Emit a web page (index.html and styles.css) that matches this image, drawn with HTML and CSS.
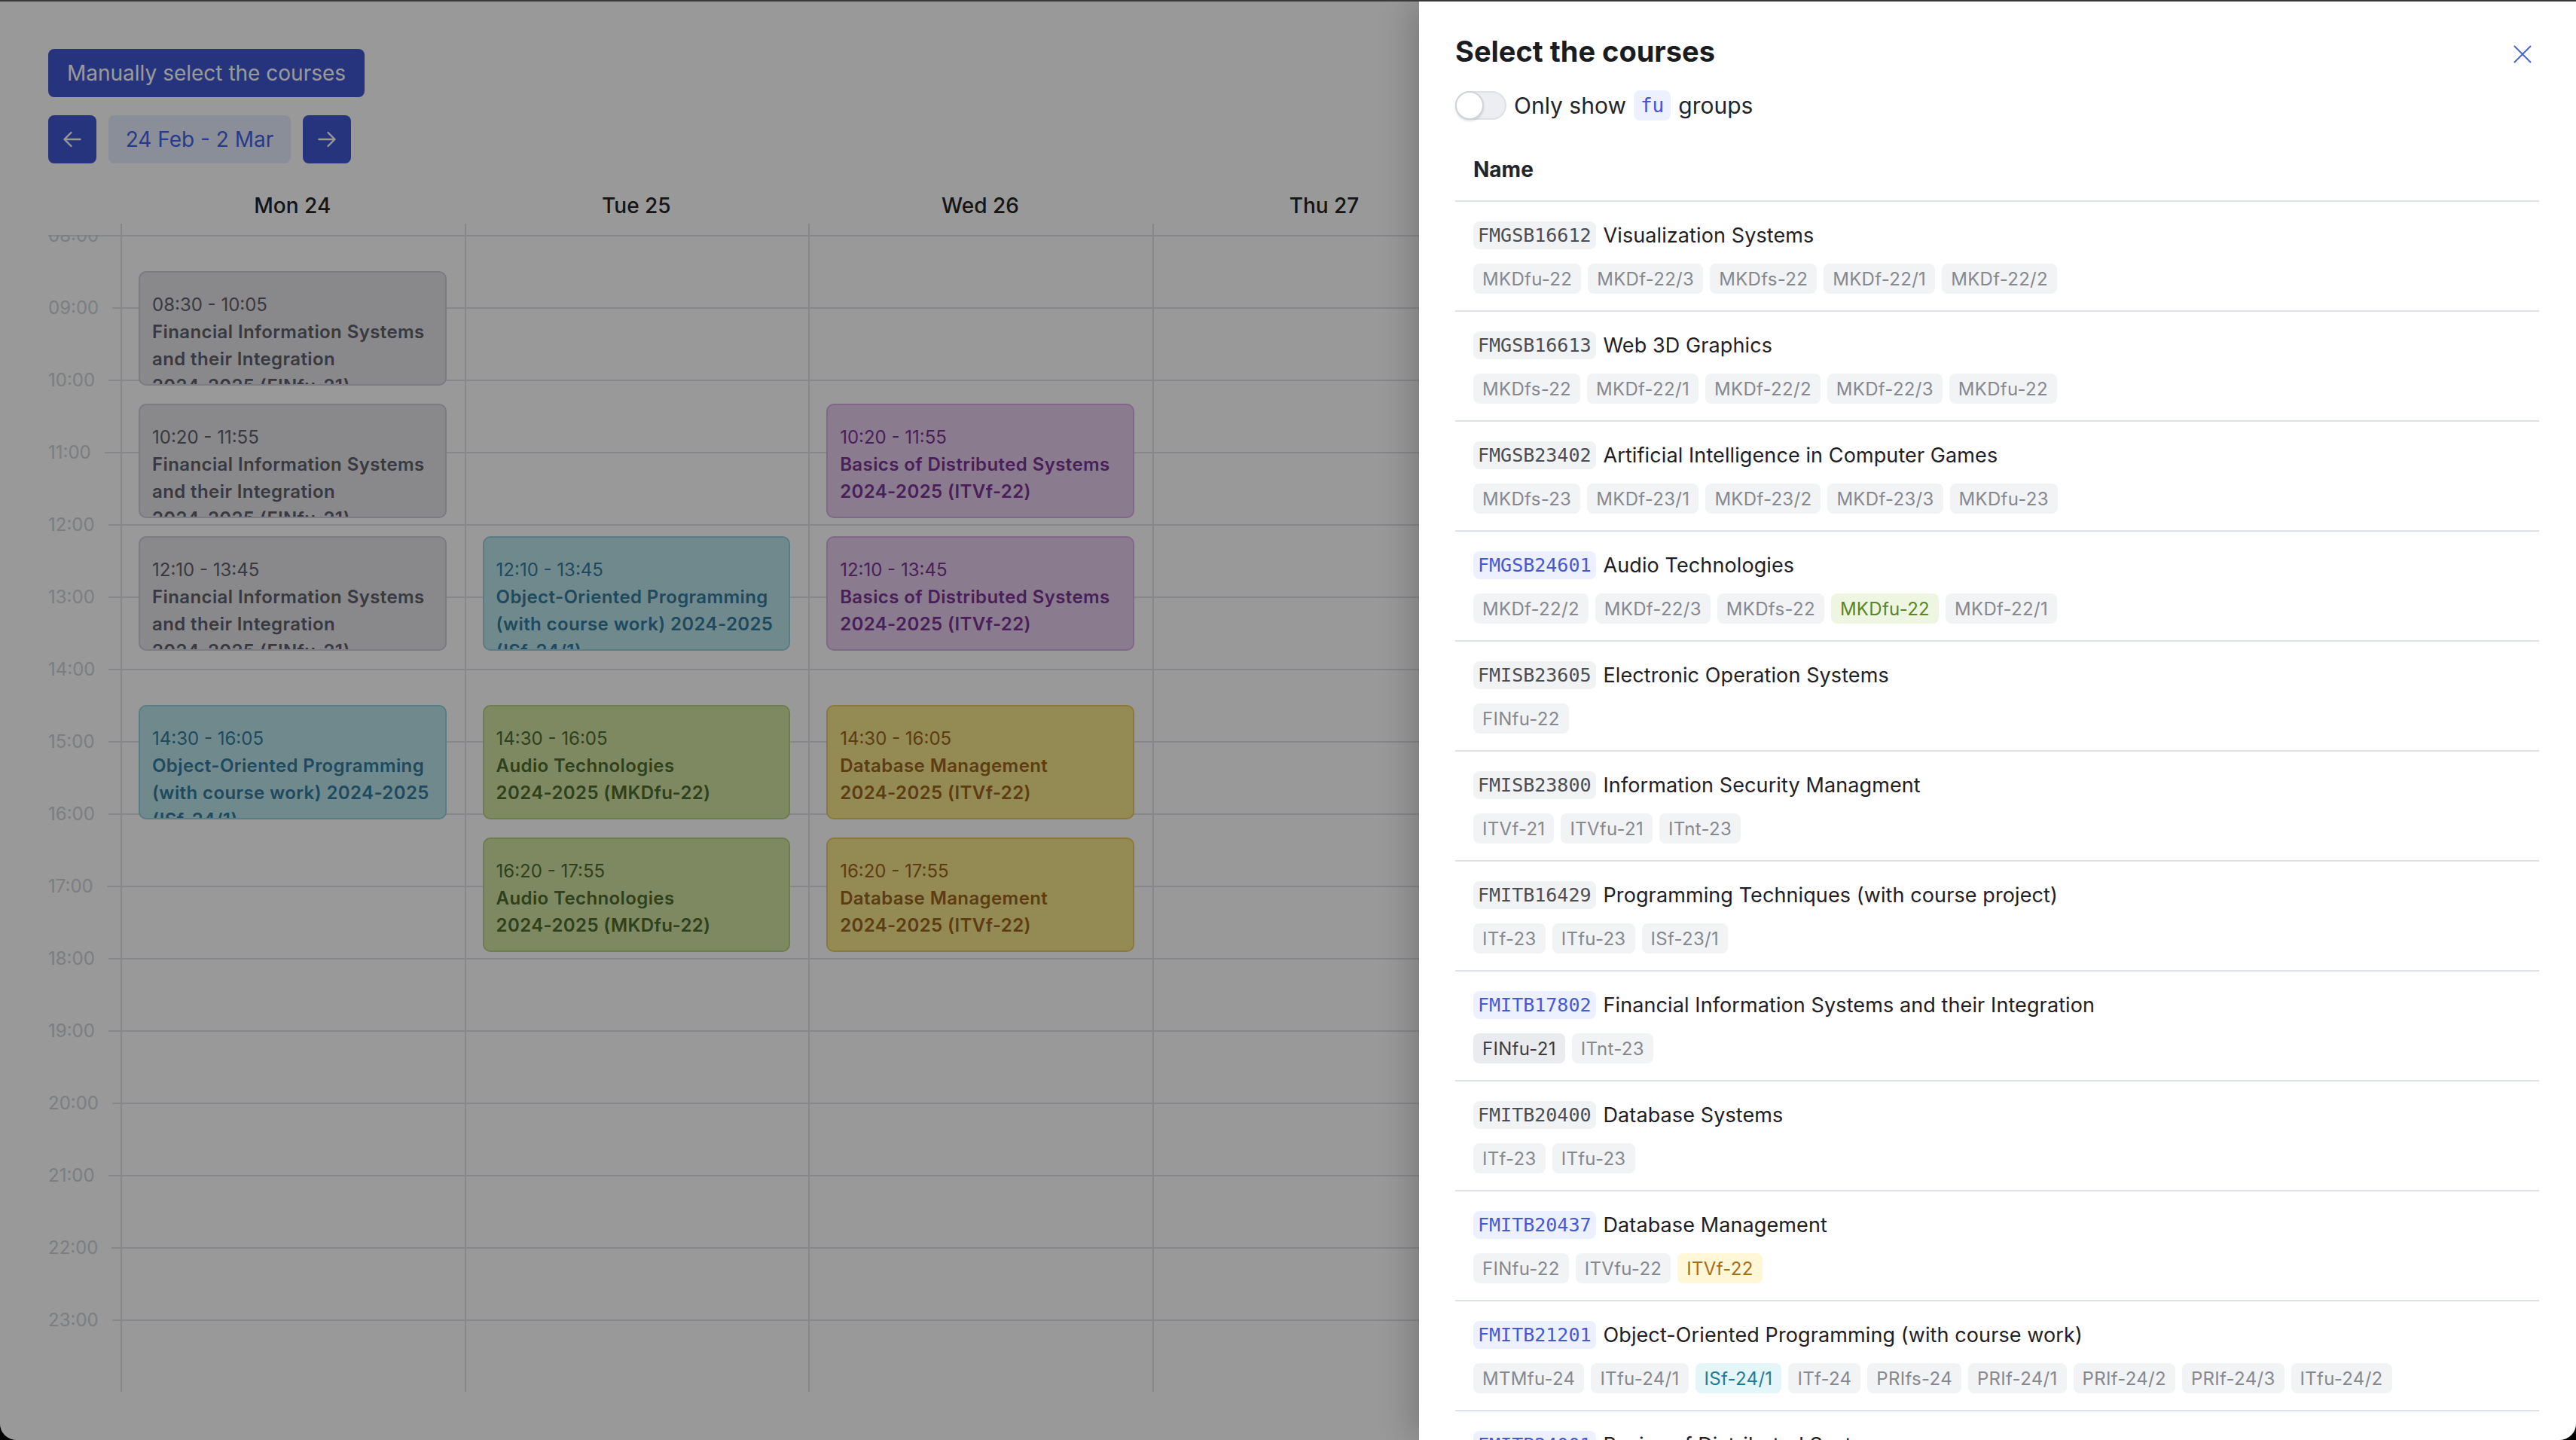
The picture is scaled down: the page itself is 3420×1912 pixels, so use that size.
FILE: index.html
```html
<!DOCTYPE html>
<html lang="en">
<head>
<meta charset="utf-8">
<title>Schedule</title>
<link rel="stylesheet" href="styles.css">
</head>
<body>
<div class="window">
  <main class="page">
    <div class="toolbar">
      <button class="btn">Manually select the courses</button>
      <div class="week-nav">
        <button class="btn btn-icon" aria-label="Previous week">
          <svg viewBox="0 0 24 24" width="36" height="36" fill="none" stroke="currentColor" stroke-width="1.6" stroke-linecap="round" stroke-linejoin="round"><path d="M5 12h14M5 12l6 6M5 12l6-6"/></svg>
        </button>
        <div class="week-label">24 Feb - 2 Mar</div>
        <button class="btn btn-icon" aria-label="Next week">
          <svg viewBox="0 0 24 24" width="36" height="36" fill="none" stroke="currentColor" stroke-width="1.6" stroke-linecap="round" stroke-linejoin="round"><path d="M19 12H5M19 12l-6 6M19 12l-6-6"/></svg>
        </button>
      </div>
    </div>

    <section class="calendar">
      <div class="cal-head">
        <div></div>
        <div class="day-name">Mon 24</div>
        <div class="day-name">Tue 25</div>
        <div class="day-name">Wed 26</div>
        <div class="day-name">Thu 27</div>
        <div class="day-name">Fri 28</div>
        <div class="day-name">Sat 1</div>
        <div class="day-name">Sun 2</div>
      </div>
      <div class="cal-body">
        <div class="gutter">
          <div class="gutter-hours">
            <div class="hour"><span>08:00</span><i></i></div>
            <div class="hour"><span>09:00</span><i></i></div>
            <div class="hour"><span>10:00</span><i></i></div>
            <div class="hour"><span>11:00</span><i></i></div>
            <div class="hour"><span>12:00</span><i></i></div>
            <div class="hour"><span>13:00</span><i></i></div>
            <div class="hour"><span>14:00</span><i></i></div>
            <div class="hour"><span>15:00</span><i></i></div>
            <div class="hour"><span>16:00</span><i></i></div>
            <div class="hour"><span>17:00</span><i></i></div>
            <div class="hour"><span>18:00</span><i></i></div>
            <div class="hour"><span>19:00</span><i></i></div>
            <div class="hour"><span>20:00</span><i></i></div>
            <div class="hour"><span>21:00</span><i></i></div>
            <div class="hour"><span>22:00</span><i></i></div>
            <div class="hour"><span>23:00</span><i></i></div>
          </div>
        </div>

        <div class="day-col">
          <div class="slots">
            <div class="event ev-gray" style="top:48px;height:152px">
              <span class="ev-time">08:30 - 10:05</span>
              <span class="ev-line">Financial Information Systems</span>
              <span class="ev-line">and their Integration</span>
              <span class="ev-line">2024-2025 (FINfu-21)</span>
            </div>
            <div class="event ev-gray" style="top:224px;height:152px">
              <span class="ev-time">10:20 - 11:55</span>
              <span class="ev-line">Financial Information Systems</span>
              <span class="ev-line">and their Integration</span>
              <span class="ev-line">2024-2025 (FINfu-21)</span>
            </div>
            <div class="event ev-gray" style="top:400px;height:152px">
              <span class="ev-time">12:10 - 13:45</span>
              <span class="ev-line">Financial Information Systems</span>
              <span class="ev-line">and their Integration</span>
              <span class="ev-line">2024-2025 (FINfu-21)</span>
            </div>
            <div class="event ev-teal" style="top:624px;height:152px">
              <span class="ev-time">14:30 - 16:05</span>
              <span class="ev-line">Object-Oriented Programming</span>
              <span class="ev-line">(with course work) 2024-2025</span>
              <span class="ev-line">(ISf-24/1)</span>
            </div>
          </div>
        </div>

        <div class="day-col">
          <div class="slots">
            <div class="event ev-teal" style="top:400px;height:152px">
              <span class="ev-time">12:10 - 13:45</span>
              <span class="ev-line">Object-Oriented Programming</span>
              <span class="ev-line">(with course work) 2024-2025</span>
              <span class="ev-line">(ISf-24/1)</span>
            </div>
            <div class="event ev-green" style="top:624px;height:152px">
              <span class="ev-time">14:30 - 16:05</span>
              <span class="ev-line">Audio Technologies</span>
              <span class="ev-line">2024-2025 (MKDfu-22)</span>
            </div>
            <div class="event ev-green" style="top:800px;height:152px">
              <span class="ev-time">16:20 - 17:55</span>
              <span class="ev-line">Audio Technologies</span>
              <span class="ev-line">2024-2025 (MKDfu-22)</span>
            </div>
          </div>
        </div>

        <div class="day-col">
          <div class="slots">
            <div class="event ev-purple" style="top:224px;height:152px">
              <span class="ev-time">10:20 - 11:55</span>
              <span class="ev-line">Basics of Distributed Systems</span>
              <span class="ev-line">2024-2025 (ITVf-22)</span>
            </div>
            <div class="event ev-purple" style="top:400px;height:152px">
              <span class="ev-time">12:10 - 13:45</span>
              <span class="ev-line">Basics of Distributed Systems</span>
              <span class="ev-line">2024-2025 (ITVf-22)</span>
            </div>
            <div class="event ev-yellow" style="top:624px;height:152px">
              <span class="ev-time">14:30 - 16:05</span>
              <span class="ev-line">Database Management</span>
              <span class="ev-line">2024-2025 (ITVf-22)</span>
            </div>
            <div class="event ev-yellow" style="top:800px;height:152px">
              <span class="ev-time">16:20 - 17:55</span>
              <span class="ev-line">Database Management</span>
              <span class="ev-line">2024-2025 (ITVf-22)</span>
            </div>
          </div>
        </div>

        <div class="day-col"><div class="slots"></div></div>
        <div class="day-col"><div class="slots"></div></div>
        <div class="day-col"><div class="slots"></div></div>
        <div class="day-col"><div class="slots"></div></div>
      </div>
    </section>
  </main>

  <div class="overlay"></div>

  <aside class="drawer">
    <header class="drawer-head">
      <h2 class="drawer-title">Select the courses</h2>
      <button class="close" aria-label="Close">
        <svg viewBox="0 0 24 24" width="24" height="24" fill="none" stroke="currentColor" stroke-width="2" stroke-linecap="round"><path d="M1.5 1.5L22.5 22.5M22.5 1.5L1.5 22.5"/></svg>
      </button>
    </header>

    <div class="switch-row">
      <span class="switch"><span class="thumb"></span></span>
      <span class="switch-label">
        <span>Only show</span>
        <code class="code-inline">fu</code>
        <span>groups</span>
      </span>
    </div>

    <table class="courses">
      <thead><tr><th>Name</th></tr></thead>
      <tbody>
        <tr><td>
          <div class="course-line"><code class="code">FMGSB16612</code><span class="course-name">Visualization Systems</span></div>
          <div class="groups"><span class="badge">MKDfu-22</span><span class="badge">MKDf-22/3</span><span class="badge">MKDfs-22</span><span class="badge">MKDf-22/1</span><span class="badge">MKDf-22/2</span></div>
        </td></tr>
        <tr><td>
          <div class="course-line"><code class="code">FMGSB16613</code><span class="course-name">Web 3D Graphics</span></div>
          <div class="groups"><span class="badge">MKDfs-22</span><span class="badge">MKDf-22/1</span><span class="badge">MKDf-22/2</span><span class="badge">MKDf-22/3</span><span class="badge">MKDfu-22</span></div>
        </td></tr>
        <tr><td>
          <div class="course-line"><code class="code">FMGSB23402</code><span class="course-name">Artificial Intelligence in Computer Games</span></div>
          <div class="groups"><span class="badge">MKDfs-23</span><span class="badge">MKDf-23/1</span><span class="badge">MKDf-23/2</span><span class="badge">MKDf-23/3</span><span class="badge">MKDfu-23</span></div>
        </td></tr>
        <tr><td>
          <div class="course-line"><code class="code code-blue">FMGSB24601</code><span class="course-name">Audio Technologies</span></div>
          <div class="groups"><span class="badge">MKDf-22/2</span><span class="badge">MKDf-22/3</span><span class="badge">MKDfs-22</span><span class="badge badge-green">MKDfu-22</span><span class="badge">MKDf-22/1</span></div>
        </td></tr>
        <tr><td>
          <div class="course-line"><code class="code">FMISB23605</code><span class="course-name">Electronic Operation Systems</span></div>
          <div class="groups"><span class="badge">FINfu-22</span></div>
        </td></tr>
        <tr><td>
          <div class="course-line"><code class="code">FMISB23800</code><span class="course-name">Information Security Managment</span></div>
          <div class="groups"><span class="badge">ITVf-21</span><span class="badge">ITVfu-21</span><span class="badge">ITnt-23</span></div>
        </td></tr>
        <tr><td>
          <div class="course-line"><code class="code">FMITB16429</code><span class="course-name">Programming Techniques (with course project)</span></div>
          <div class="groups"><span class="badge">ITf-23</span><span class="badge">ITfu-23</span><span class="badge">ISf-23/1</span></div>
        </td></tr>
        <tr><td>
          <div class="course-line"><code class="code code-blue">FMITB17802</code><span class="course-name">Financial Information Systems and their Integration</span></div>
          <div class="groups"><span class="badge badge-gray">FINfu-21</span><span class="badge">ITnt-23</span></div>
        </td></tr>
        <tr><td>
          <div class="course-line"><code class="code">FMITB20400</code><span class="course-name">Database Systems</span></div>
          <div class="groups"><span class="badge">ITf-23</span><span class="badge">ITfu-23</span></div>
        </td></tr>
        <tr><td>
          <div class="course-line"><code class="code code-blue">FMITB20437</code><span class="course-name">Database Management</span></div>
          <div class="groups"><span class="badge">FINfu-22</span><span class="badge">ITVfu-22</span><span class="badge badge-yellow">ITVf-22</span></div>
        </td></tr>
        <tr><td>
          <div class="course-line"><code class="code code-blue">FMITB21201</code><span class="course-name">Object-Oriented Programming (with course work)</span></div>
          <div class="groups"><span class="badge">MTMfu-24</span><span class="badge">ITfu-24/1</span><span class="badge badge-cyan">ISf-24/1</span><span class="badge">ITf-24</span><span class="badge">PRIfs-24</span><span class="badge">PRIf-24/1</span><span class="badge">PRIf-24/2</span><span class="badge">PRIf-24/3</span><span class="badge">ITfu-24/2</span></div>
        </td></tr>
        <tr><td>
          <div class="course-line"><code class="code code-blue">FMITB24001</code><span class="course-name">Basics of Distributed Systems</span></div>
          <div class="groups"><span class="badge">ITVfu-22</span><span class="badge badge-purple">ITVf-22</span></div>
        </td></tr>
      </tbody>
    </table>
  </aside>
</div>
</body>
</html>
```

FILE: styles.css
```css
* {
  box-sizing: border-box;
}

html {
  background: #000;
}

body {
  margin: 0;
  font-family: Inter, "Noto Sans", sans-serif;
  color: #212529;
}

.window {
  position: relative;
  height: 1912px;
  border-top: 2px solid #39393c;
  border-radius: 0 0 22px 22px;
  overflow: hidden;
  background: #fff;
}

/* ---------- left page ---------- */

.page {
  padding: 63px 64px 0;
}

.toolbar {
  display: flex;
  flex-direction: column;
  align-items: flex-start;
  gap: 24px;
}

.btn {
  display: inline-flex;
  align-items: center;
  justify-content: center;
  height: 64px;
  padding: 0 25px;
  border: 0;
  border-radius: 8px;
  background: #3e58cf;
  color: #fff;
  font-family: Inter, "Noto Sans", sans-serif;
  font-size: 28px;
  font-weight: 400;
  line-height: 1;
}

.btn-icon {
  width: 64px;
  padding: 0;
}

.week-nav {
  display: flex;
  gap: 16px;
}

.week-label {
  display: flex;
  align-items: center;
  justify-content: center;
  width: 242px;
  height: 64px;
  border-radius: 8px;
  background: #e7edff;
  color: #4462e6;
  font-size: 28px;
}

.cal-head,
.cal-body {
  display: grid;
  grid-template-columns: 96px repeat(7, 1fr);
}

.cal-head {
  margin-top: 36px;
  padding-bottom: 4px;
}

.day-name {
  text-align: center;
  font-size: 28px;
  font-weight: 500;
  line-height: 40px;
  color: #242424;
}

.gutter {
  padding-top: 15px;
}

.gutter-hours {
  position: relative;
  height: 1536px;
  overflow: hidden;
}

.gutter-hours::before {
  content: "";
  position: absolute;
  top: 0;
  left: 0;
  right: 0;
  height: 2px;
  background: #dee2e6;
}

.hour {
  display: flex;
  align-items: flex-start;
  height: 96px;
}

.hour span {
  font-size: 24px;
  line-height: 28px;
  color: #ced2d8;
  transform: translateY(-13px);
}

.hour i {
  flex: 1;
  height: 2px;
  margin-left: 18px;
  background: #dee2e6;
}

.day-col {
  border-left: 2px solid #dee2e6;
  padding-top: 15px;
}

.slots {
  position: relative;
  height: 1536px;
  background: repeating-linear-gradient(to bottom, #dee2e6 0 2px, transparent 2px 96px);
}

.event {
  position: absolute;
  left: 22px;
  right: 24px;
  padding: 25px 16px 0;
  border: 2px solid;
  border-radius: 10px;
  overflow: hidden;
  font-size: 24px;
  line-height: 36px;
}

.ev-time {
  display: block;
  white-space: nowrap;
}

.ev-line {
  display: block;
  white-space: nowrap;
  font-weight: 600;
  letter-spacing: 0.4px;
}

.ev-gray {
  background: #e4e5ea;
  border-color: #cdced8;
  color: #606069;
}

.ev-teal {
  background: #bbe5ec;
  border-color: #97cfda;
  color: #347b9c;
}

.ev-green {
  background: #d3e5a4;
  border-color: #b7cf85;
  color: #4e6b2f;
}

.ev-purple {
  background: #e8ceed;
  border-color: #d7ade3;
  color: #7a3595;
}

.ev-yellow {
  background: #f6e68d;
  border-color: #e6ca6a;
  color: #9b6521;
}

.overlay {
  position: absolute;
  inset: 0;
  background: rgba(0, 0, 0, 0.4);
}

/* ---------- drawer ---------- */

.drawer {
  position: absolute;
  top: 0;
  right: 0;
  bottom: 0;
  width: 1536px;
  padding: 44px 49px 0 48px;
  background: #fff;
  box-shadow: -8px 0 44px rgba(0, 0, 0, 0.22);
  overflow: hidden;
}

.drawer-head {
  display: flex;
  align-items: center;
  justify-content: space-between;
  height: 44px;
}

.drawer-title {
  margin: 0;
  font-size: 38px;
  font-weight: 700;
  line-height: 44px;
  color: #1b1c1f;
}

.close {
  display: flex;
  align-items: center;
  justify-content: center;
  width: 44px;
  height: 44px;
  margin-top: 8px;
  padding: 0;
  border: 0;
  background: none;
  color: #4c62d3;
}

.switch-row {
  display: flex;
  align-items: center;
  gap: 10px;
  height: 42px;
  margin-top: 29px;
}

.switch {
  display: flex;
  align-items: center;
  width: 68px;
  height: 38px;
  border: 2px solid #dee2e6;
  border-radius: 19px;
  background: #eceef1;
}

.thumb {
  width: 38px;
  height: 38px;
  margin-left: -2px;
  border: 2px solid #ced4da;
  border-radius: 50%;
  background: #fff;
  box-shadow: 0 2px 3px rgba(0, 0, 0, 0.12);
}

.switch-label {
  display: flex;
  align-items: center;
  gap: 10px;
  font-size: 30px;
  color: #212529;
}

.code-inline {
  height: 40px;
  padding: 0 9px;
  border-radius: 8px;
  background: #edf0fe;
  color: #3f55d4;
  font-family: "DejaVu Sans Mono", "Liberation Mono", monospace;
  font-size: 26px;
  line-height: 40px;
}

.courses {
  width: 100%;
  margin-top: 23px;
  border-collapse: separate;
  border-spacing: 0;
}

.courses th {
  padding: 19px 24px;
  border-bottom: 2px solid #dee2e6;
  text-align: left;
  font-size: 28px;
  font-weight: 700;
  line-height: 44px;
  color: #212529;
}

.courses td {
  padding: 23px 24px 22px;
  border-bottom: 2px solid #dee2e6;
}

.course-line {
  display: flex;
  align-items: center;
  gap: 10px;
  height: 42px;
}

.code {
  padding: 0 6px;
  border-radius: 8px;
  background: #f1f2f4;
  color: #4b4d53;
  font-family: "DejaVu Sans Mono", "Liberation Mono", monospace;
  font-size: 25px;
  line-height: 37px;
}

.code-blue {
  background: #edf0fe;
  color: #4659d5;
}

.course-name {
  font-size: 27px;
  letter-spacing: 0.1px;
  color: #1f2024;
}

.groups {
  display: flex;
  flex-wrap: wrap;
  gap: 9px;
  margin-top: 17px;
}

.badge {
  display: inline-flex;
  align-items: center;
  height: 40px;
  padding: 0 12px;
  border-radius: 8px;
  background: #f2f3f5;
  color: #86888f;
  font-size: 24px;
  letter-spacing: 0.3px;
}

.badge-green {
  background: #eef6e1;
  color: #5a8428;
}

.badge-gray {
  background: #eaebee;
  color: #3c3d43;
}

.badge-yellow {
  background: #fff7d6;
  color: #a86c17;
}

.badge-cyan {
  background: #e5f6f9;
  color: #1f7b96;
}

.badge-purple {
  background: #f8eefb;
  color: #8a3fa6;
}
```
